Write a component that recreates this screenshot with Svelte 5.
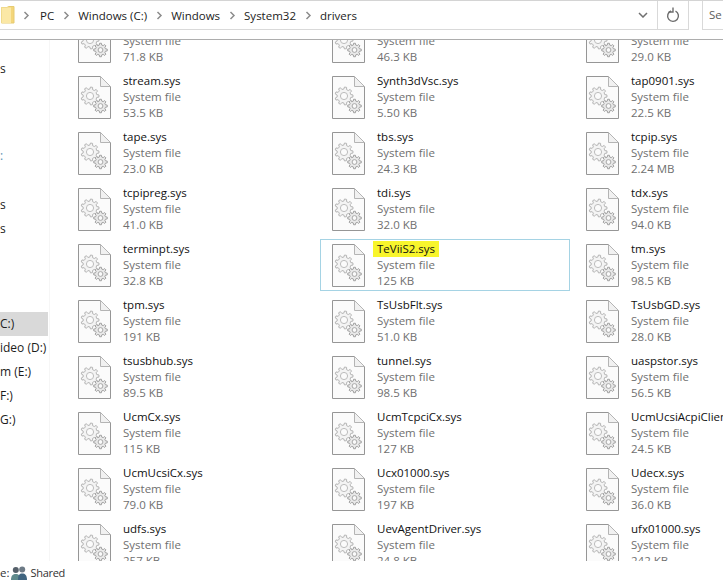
<script>
  const crumbs = ['PC', 'Windows (C:)', 'Windows', 'System32', 'drivers'];

  // first row sits under the toolbar, only its lower two lines show
  const files = [
    ['', '71.8 KB'], ['', '46.3 KB'], ['', '29.0 KB'],
    ['stream.sys', '53.5 KB'], ['Synth3dVsc.sys', '5.50 KB'], ['tap0901.sys', '22.5 KB'],
    ['tape.sys', '23.0 KB'], ['tbs.sys', '24.3 KB'], ['tcpip.sys', '2.24 MB'],
    ['tcpipreg.sys', '41.0 KB'], ['tdi.sys', '32.0 KB'], ['tdx.sys', '94.0 KB'],
    ['terminpt.sys', '32.8 KB'], ['TeViiS2.sys', '125 KB'], ['tm.sys', '98.5 KB'],
    ['tpm.sys', '191 KB'], ['TsUsbFlt.sys', '51.0 KB'], ['TsUsbGD.sys', '28.0 KB'],
    ['tsusbhub.sys', '89.5 KB'], ['tunnel.sys', '98.5 KB'], ['uaspstor.sys', '56.5 KB'],
    ['UcmCx.sys', '115 KB'], ['UcmTcpciCx.sys', '127 KB'], ['UcmUcsiAcpiClient.sys', '24.5 KB'],
    ['UcmUcsiCx.sys', '79.0 KB'], ['Ucx01000.sys', '197 KB'], ['Udecx.sys', '36.0 KB'],
    ['udfs.sys', '257 KB'], ['UevAgentDriver.sys', '24.8 KB'], ['ufx01000.sys', '242 KB']
  ];

  const selected = 'TeViiS2.sys';

  function gearPath(cx, cy, outer, inner, teeth) {
    const step = (Math.PI * 2) / teeth;
    const pts = [];
    for (let i = 0; i < teeth; i++) {
      const a = i * step;
      const add = (r, t) => {
        pts.push((cx + r * Math.cos(a + t * step)).toFixed(2) + ' ' + (cy + r * Math.sin(a + t * step)).toFixed(2));
      };
      add(inner, -0.3);
      add(outer, -0.17);
      add(outer, 0.17);
      add(inner, 0.3);
    }
    return 'M' + pts.join('L') + 'Z';
  }

  const bigGear = gearPath(12, 20, 9, 6.9, 9);
  const smallGear = gearPath(22.5, 30, 6.8, 5.1, 8);
</script>

{#snippet fileIcon()}
  <svg class="file-icon" width="34" height="44" viewBox="0 0 34 44">
    <path d="M0.5 0.5H22.5L32.5 10.5V42.500H0.5Z" fill="#fbfbfb" stroke="#969696" />
    <path d="M22.5 0.5V10.5H32.5Z" fill="#f1f1f1" stroke="#b4b4b4" />
    <path d={bigGear} fill="#f4f4f4" stroke="#b5b5b5" />
    <circle cx="12" cy="20" r="3.600" fill="#fbfbfb" stroke="#bdbdbd" />
    <path d={smallGear} fill="#e9e9e9" stroke="#a2a2a2" />
    <circle cx="22.5" cy="30" r="2.400" fill="#fafafa" stroke="#a8a8a8" />
  </svg>
{/snippet}

{#snippet chevron()}
  <svg class="sep" width="24" height="9" viewBox="0 0 24 9">
    <path d="M10.500 1L14 4.500L10.500 8" fill="none" stroke="#8c8c8c" stroke-width="1.500" />
  </svg>
{/snippet}

<div class="window">
  <header class="toolbar">
    <div class="address">
      <svg class="folder" width="14" height="18" viewBox="0 0 14 18">
        <path d="M0.5 1.5H6L7.5 0.5H13V17H0.5Z" fill="#f4d67a" stroke="#e6cb72" />
        <path d="M0.5 1.5H10V17H0.5Z" fill="#fbe8a6" />
      </svg>
      <span class="lead">{@render chevron()}</span>
      {#each crumbs as crumb, i}
        <span class="crumb">{crumb}</span>
        {#if i < crumbs.length - 1}{@render chevron()}{/if}
      {/each}
      <svg class="drop" width="10" height="6" viewBox="0 0 10 6">
        <path d="M1 1L5 5L9 1" fill="none" stroke="#707070" stroke-width="1.500" />
      </svg>
      <div class="refresh">
        <svg width="14" height="16" viewBox="0 0 14 16">
          <path d="M5 4A5.400 5.400 0 1 0 9.500 4.200" fill="none" stroke="#6e6e6e" stroke-width="1.400" />
          <path d="M7 0.500V5H2.800" fill="none" stroke="#6e6e6e" stroke-width="1.400" />
        </svg>
      </div>
    </div>
    <div class="search">Se</div>
  </header>

  <div class="body">
    <nav class="sidebar">
      <div class="nav-item first-item">s</div>
      <div class="nav-item mark">:</div>
      <div class="nav-item gap-a">s</div>
      <div class="nav-item">s</div>
      <div class="nav-item active gap-b">C:)</div>
      <div class="nav-item">ideo (D:)</div>
      <div class="nav-item">m (E:)</div>
      <div class="nav-item">F:)</div>
      <div class="nav-item">G:)</div>
    </nav>

    <main class="pane">
      <div class="grid">
        {#each files as [name, size]}
          <div class="tile" class:selected={name === selected}>
            {@render fileIcon()}
            <div class="meta">
              <div class="name"><span class:marked={name === selected}>{name}</span></div>
              <div class="sub">System file</div>
              <div class="sub">{size}</div>
            </div>
          </div>
        {/each}
      </div>
    </main>
  </div>

  <footer class="status">
    <span>e:</span>
    <svg width="16" height="16" viewBox="0 0 16 16">
      <circle cx="4.800" cy="5" r="3" fill="#55606a" />
      <path d="M0 15C0 10.500 2 9 4.800 9C7.600 9 9.500 10.500 9.500 15Z" fill="#5f8a8c" />
      <circle cx="11.200" cy="4.500" r="3" fill="#6d7a86" />
      <path d="M7 15C7 10 8.500 8.500 11.200 8.500C14 8.500 16 10 16 15Z" fill="#3f6480" />
    </svg>
    <span class="shared">Shared</span>
  </footer>
</div>

<style>
  :global(body) {
    overflow: hidden;
    background: #fff;
  }

  .window {
    display: flex;
    flex-direction: column;
    width: 723px;
    height: 582px;
    overflow: hidden;
    background: #fff;
    color: #1c1c1c;
    font-family: 'Open Sans', 'Noto Sans', sans-serif;
    font-size: 11.5px;
  }

  .toolbar {
    display: flex;
    flex: none;
    width: 723px;
    height: 40px;
    box-sizing: border-box;
    border-top: 1px solid #d4d4d4;
    border-bottom: 1px solid #adadad;
    align-items: flex-start;
  }

  .address {
    display: flex;
    flex: none;
    align-items: center;
    width: 689px;
    height: 29px;
    box-sizing: border-box;
    border-right: 1px solid #d9d9d9;
    border-bottom: 1px solid #d9d9d9;
  }

  .folder {
    margin-left: 1px;
    flex: none;
  }

  .lead {
    display: flex;
    margin: 0 2px 0 -1px;
  }

  .sep {
    flex: none;
  }

  .crumb {
    white-space: nowrap;
  }

  .drop {
    margin-left: auto;
    margin-right: 9px;
  }

  .refresh {
    display: flex;
    align-items: center;
    justify-content: center;
    width: 30px;
    height: 100%;
    border-left: 1px solid #d9d9d9;
  }

  .search {
    flex: none;
    width: 21px;
    height: 29px;
    box-sizing: border-box;
    margin-left: 13px;
    padding: 6px 0 0 6px;
    border-left: 1px solid #d9d9d9;
    border-bottom: 1px solid #d9d9d9;
    color: #5c5c5c;
  }

  .body {
    display: flex;
    flex: 1;
    min-height: 0;
  }

  .sidebar {
    flex: none;
    width: 50px;
    box-sizing: border-box;
    border-right: 1px solid #f6f6f6;
    font-size: 12px;
    white-space: nowrap;
  }

  .nav-item {
    width: 48px;
    height: 24px;
    line-height: 23px;
  }

  .first-item {
    margin-top: 17px;
  }

  .mark {
    margin-top: 63px;
    color: #5d8fb5;
  }

  .gap-a {
    margin-top: 25px;
  }

  .gap-b {
    margin-top: 71px;
  }

  .active {
    background: #d9d9d9;
  }

  .pane {
    flex: 1;
    min-width: 0;
    overflow: hidden;
  }

  .grid {
    display: grid;
    grid-template-columns: repeat(3, 250px);
    grid-auto-rows: 52px;
    gap: 4px;
    margin-top: -25px;
    padding-left: 16px;
  }

  .tile {
    display: flex;
    box-sizing: border-box;
    padding: 4px 0 0 11px;
    border: 1px solid transparent;
  }

  .tile.selected {
    border-color: #a5d3e4;
  }

  .file-icon {
    flex: none;
    margin-right: 11px;
  }

  .meta {
    line-height: 16px;
    white-space: nowrap;
    margin-top: -3px;
  }

  .name {
    min-height: 16px;
    color: #111;
  }

  .marked {
    margin: 0 -4px;
    padding: 0 4px 1px;
    background: #f8f52c;
  }

  .sub {
    color: #707070;
  }

  .status {
    display: flex;
    flex: none;
    align-items: center;
    gap: 2px;
    height: 21px;
    padding-top: 2px;
    box-sizing: border-box;
    background: #fff;
    color: #333;
  }

  .shared {
    margin-left: 1px;
    font-size: 11px;
    letter-spacing: -0.3px;
  }
</style>
